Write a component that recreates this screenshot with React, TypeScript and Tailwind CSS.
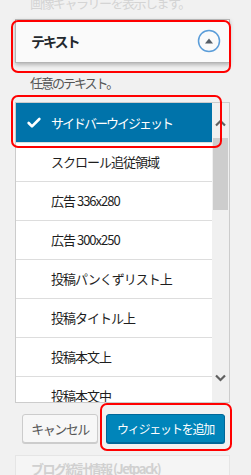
import { Check } from 'lucide-react'

const items = [
  'スクロール追従領域',
  '広告 336x280',
  '広告 300x250',
  '投稿パンくずリスト上',
  '投稿タイトル上',
  '投稿本文上',
  '投稿本文中',
]

export default function App() {
  return (
    <div
      className="relative h-[475px] w-[251px] overflow-hidden bg-[#f1f1f1] text-[#23282d]"
      style={{ fontFamily: '"Noto Sans CJK JP", "Noto Sans", sans-serif' }}
    >
      <div className="flex flex-col pl-[15px] pr-[21px]">
        {/* faded text above */}
        <div className="-mt-[7px] h-[26px] pl-[15px] text-[13px] leading-[20px] tracking-[-1.5px] text-[#d4d4d4]">
          画像ギャラリーを表示します。
        </div>

        {/* widget title bar */}
        <div className="flex h-[44px] items-center justify-between border border-[#b4b4b4] bg-[#fafafa] pl-[15px] pr-[8px] shadow-[0_2px_4px_rgba(0,0,0,0.25)]">
          <span className="text-[14px] font-bold tracking-[-2px] text-[#23282d]">テキスト</span>
          <svg width="24" height="24" viewBox="0 0 24 24">
            <circle cx="12" cy="12" r="10.5" fill="none" stroke="#5b9dd9" strokeWidth="1.5" />
            <path d="M8 14.5 L12 9.5 L16 14.5 Z" fill="#555d66" />
          </svg>
        </div>

        <div className="mt-[11px] h-[18px] pl-[15px] text-[13px] leading-[18px] tracking-[-2px] text-[#555]">
          任意のテキスト。
        </div>

        {/* list box */}
        <div className="mt-[10px] flex h-[301px] border border-[#cccccc] bg-white">
          <div className="flex-1 overflow-hidden">
            <div className="flex h-[39px] items-center bg-[#0073aa] pl-[10px] text-white">
              <Check className="h-[16px] w-[16px]" strokeWidth={4} />
              <span className="ml-[9px] text-[13px] tracking-[-2px]">サイドバーウイジェット</span>
            </div>
            {items.map((item) => (
              <div
                key={item}
                className="flex h-[39px] shrink-0 items-center border-t border-[#dddddd] pl-[35px] text-[13px] tracking-[-1px] text-[#1e1e1e]"
              >
                {item}
              </div>
            ))}
          </div>
          <div className="flex w-[17px] flex-col bg-[#f0f0f0]">
            <div className="flex h-[35px] items-center justify-center pt-[4px]">
              <svg width="11" height="8" viewBox="0 0 11 8">
                <path d="M1 6.5 L5.5 2 L10 6.5" fill="none" stroke="#606060" strokeWidth="2.2" />
              </svg>
            </div>
            <div className="mx-[1px] h-[72px] bg-[#cdcdcd]" />
            <div className="flex-1" />
            <div className="flex h-[28px] items-start justify-center">
              <svg width="11" height="8" viewBox="0 0 11 8">
                <path d="M1 1.5 L5.5 6 L10 1.5" fill="none" stroke="#606060" strokeWidth="2.2" />
              </svg>
            </div>
          </div>
        </div>

        {/* buttons */}
        <div className="mt-[11px] flex gap-[8px] pl-[7px]">
          <button className="h-[29px] w-[76px] rounded-[3px] border border-[#cccccc] bg-[#f7f7f7] text-[13px] tracking-[-1.5px] text-[#555] shadow-[0_1px_0_#cccccc]">
            キャンセル
          </button>
          <button className="h-[29px] w-[119px] rounded-[3px] border border-[#006799] bg-[#0085ba] text-[12px] tracking-[-1.2px] text-white shadow-[0_1px_0_#006799]">
            ウィジェットを追加
          </button>
        </div>

        {/* faded next widget */}
        <div className="mt-[12px] h-[40px] border border-[#e5e5e5] bg-[#f5f5f5] pl-[15px] pt-[3px] text-[13px] font-bold tracking-[-1.5px] text-[#d0d0d0]">
          ブログ統計情報 (Jetpack)
        </div>
      </div>

      {/* annotation outlines */}
      <div className="pointer-events-none absolute left-[11px] top-[20px] h-[53px] w-[220px] rounded-[7px] border-2 border-[#ff0000]" />
      <div className="pointer-events-none absolute left-[11px] top-[95px] h-[53px] w-[211px] rounded-[7px] border-2 border-[#ff0000]" />
      <div className="pointer-events-none absolute left-[100px] top-[403px] h-[48px] w-[132px] rounded-[7px] border-2 border-[#ff0000]" />
    </div>
  )
}
